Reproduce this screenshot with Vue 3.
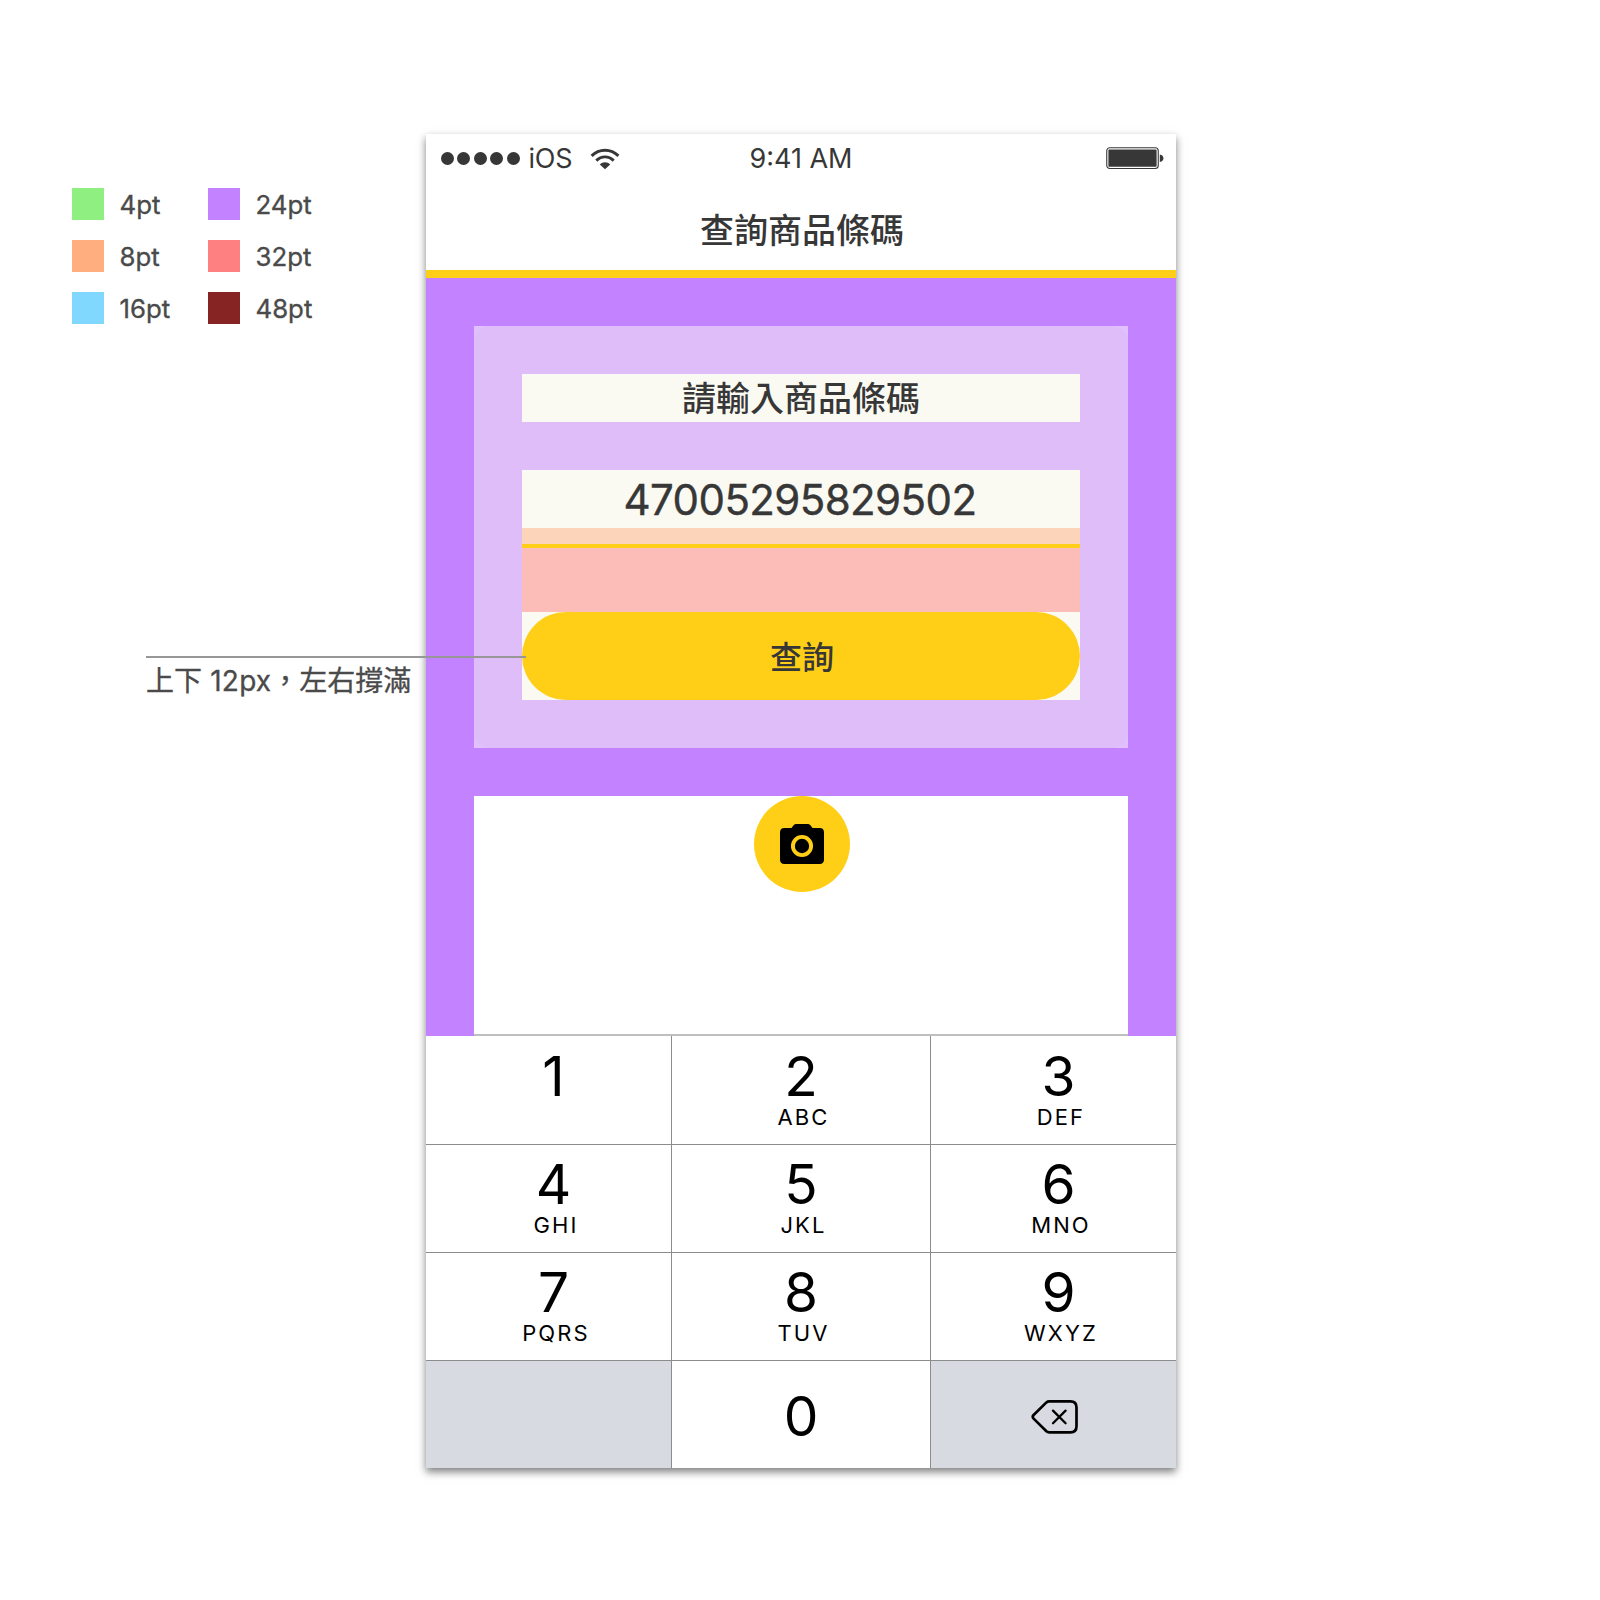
<script setup>
const legend = [
  { label: '4pt', tone: 'green' },
  { label: '24pt', tone: 'purple' },
  { label: '8pt', tone: 'orange' },
  { label: '32pt', tone: 'pink' },
  { label: '16pt', tone: 'blue' },
  { label: '48pt', tone: 'maroon' },
]

const keys = [
  { digit: '1', letters: '' },
  { digit: '2', letters: 'ABC' },
  { digit: '3', letters: 'DEF' },
  { digit: '4', letters: 'GHI' },
  { digit: '5', letters: 'JKL' },
  { digit: '6', letters: 'MNO' },
  { digit: '7', letters: 'PQRS' },
  { digit: '8', letters: 'TUV' },
  { digit: '9', letters: 'WXYZ' },
]
</script>

<template>
  <div class="board">
    <aside class="side">
      <div class="legend">
        <div v-for="item in legend" :key="item.label" class="legend-item">
          <span class="swatch" :class="item.tone"></span>
          <span class="legend-label">{{ item.label }}</span>
        </div>
      </div>
      <div class="note">上下 <span class="latin">12px</span>，左右撐滿</div>
    </aside>

    <main class="phone">
      <header class="header">
        <div class="status">
          <div class="status-left">
            <span class="dots"><i v-for="n in 5" :key="n"></i></span>
            <span class="carrier">iOS</span>
            <svg class="wifi" width="30" height="22" viewBox="0 0 30 22">
              <g fill="none" stroke="#373737" stroke-width="2.9">
                <path d="M1.6 7.9C9.2 0.3 20.8 0.3 28.4 7.9" />
                <path d="M6.3 12.6C11.4 7.6 18.6 7.6 23.7 12.6" />
              </g>
              <path d="M9.8 16.4C12.8 13.6 17.2 13.6 20.2 16.4L15 21.3Z" fill="#373737" />
            </svg>
          </div>
          <span class="time">9:41 AM</span>
          <div class="status-right">
            <svg width="58" height="23" viewBox="0 0 58 23">
              <rect x="0.75" y="0.75" width="51.5" height="20.8" rx="3" fill="#fff" stroke="#373737" stroke-width="1.1" />
              <rect x="2.4" y="2.6" width="48.2" height="17.2" rx="0.8" fill="#373737" />
              <path d="M53.8 7.4C58.6 7.8 58.6 14.6 53.8 15Z" fill="#373737" />
            </svg>
          </div>
        </div>
        <h1 class="title">查詢商品條碼</h1>
      </header>

      <section class="body">
        <div class="card">
          <div class="card-surface">
            <div class="prompt">請輸入商品條碼</div>
            <div class="code">47005295829502</div>
            <div class="gap-small"></div>
            <div class="rule"></div>
            <div class="gap-large"></div>
            <div class="button-box"><button class="button">查詢</button></div>
          </div>
        </div>
        <div class="scan">
          <div class="camera">
            <svg width="44" height="40" viewBox="0 0 44 40">
              <path d="M16.4 0H27.6Q29.4 0 30.4 1.2L32.6 4H39.6Q44 4 44 8.4V35.6Q44 40 39.6 40H4.4Q0 40 0 35.6V8.4Q0 4 4.4 4H11.4L13.6 1.2Q14.6 0 16.4 0Z" />
              <circle cx="22" cy="22" r="9.1" fill="none" stroke="#ffcf17" stroke-width="3.9" />
            </svg>
          </div>
        </div>
      </section>

      <section class="keypad">
        <div v-for="k in keys" :key="k.digit" class="key">
          <span class="digit">{{ k.digit }}</span>
          <span class="letters">{{ k.letters }}</span>
        </div>
        <div class="key grey"></div>
        <div class="key zero"><span class="digit">0</span></div>
        <div class="key grey erase">
          <svg width="48" height="36" viewBox="0 0 48 36" fill="none" stroke="#000" stroke-linecap="round" stroke-linejoin="round">
            <path d="M18.2 2.3H39.4Q45.5 2.3 45.5 8.4V27.2Q45.5 33.3 39.4 33.3H18.2Q16.6 33.3 15.4 32.2L2.6 19.6Q0.9 17.8 2.6 16L15.4 3.4Q16.6 2.3 18.2 2.3Z" stroke-width="2.7" />
            <path d="M22 11.6L34.6 24.2M34.6 11.6L22 24.2" stroke-width="2.3" />
          </svg>
        </div>
      </section>
    </main>

    <div class="callout"></div>
  </div>
</template>

<style>
body {
  background: #fff;
}
</style>

<style scoped>
.board {
  position: relative;
  display: flex;
  box-sizing: border-box;
  width: 1600px;
  height: 1600px;
  padding-top: 134px;
  overflow: hidden;
  font-family: Inter, "Noto Sans CJK TC", sans-serif;
  color: #373737;
}
.side {
  flex: none;
  width: 426px;
  color: #4a4a4a;
}
.legend {
  display: grid;
  grid-template-columns: 136px 136px;
  row-gap: 20px;
  padding: 54px 0 0 72px;
}
.legend-item {
  display: flex;
  align-items: center;
  gap: 15.5px;
  height: 32px;
}
.swatch {
  width: 32px;
  height: 32px;
}
.green { background: #8fef80; }
.purple { background: #c382ff; }
.orange { background: #ffae80; }
.blue { background: #80d8ff; }
.pink { background: #ff8080; }
.maroon { background: #862323; }
.legend-label {
  padding-top: 2px;
  font-size: 25.8px;
  line-height: 32px;
  -webkit-text-stroke: 0.35px #4a4a4a;
}
.note {
  margin: 335px 0 0 146px;
  font: 400 28px/40px "Noto Sans CJK TC", sans-serif;
  white-space: nowrap;
  word-spacing: 2px;
  -webkit-text-stroke: 0.3px #4a4a4a;
}
.latin {
  font-family: Inter, sans-serif;
  letter-spacing: 0.2px;
}
.callout {
  position: absolute;
  left: 146px;
  top: 656px;
  width: 380px;
  height: 2px;
  background: #979797;
}
.phone {
  display: flex;
  flex-direction: column;
  flex: none;
  width: 750px;
  height: 1334px;
  background: #fff;
  box-shadow: 0 4px 8px rgba(0, 0, 0, 0.5);
}
.header {
  box-sizing: border-box;
  height: 144px;
  border-bottom: 8px solid #ffcf17;
}
.status {
  display: grid;
  grid-template-columns: 1fr auto 1fr;
  height: 49px;
  font-size: 27px;
  line-height: 49px;
}
.status-left {
  display: flex;
  align-items: center;
  padding-left: 15px;
}
.dots {
  display: flex;
  gap: 3.4px;
}
.dots i {
  width: 13px;
  height: 13px;
  border-radius: 50%;
  background: #373737;
}
.carrier {
  width: 45px;
  margin-left: 9px;
  letter-spacing: -0.3px;
}
.wifi {
  margin-left: 16px;
}
.status-right {
  display: flex;
  justify-content: flex-end;
  align-items: center;
  padding-right: 12px;
}
.title {
  margin: 0;
  padding: 22px 0 0 2px;
  font: 500 34px/48px "Noto Sans CJK TC", sans-serif;
  text-align: center;
}
.body {
  box-sizing: border-box;
  display: flex;
  flex-direction: column;
  gap: 48px;
  height: 758px;
  padding: 48px 48px 0;
  background: #c382ff;
}
.card {
  background: #e1c0ff;
}
.card-surface {
  padding: 48px;
  border-radius: 16px;
  background: #debdf9;
}
.prompt {
  height: 48px;
  margin-bottom: 48px;
  background: #fafaf3;
  font: 500 34px/46px "Noto Sans CJK TC", sans-serif;
  text-align: center;
}
.code {
  height: 58px;
  padding-right: 2px;
  background: #fafaf3;
  font-size: 42px;
  line-height: 59px;
  letter-spacing: -0.6px;
  text-align: center;
  -webkit-text-stroke: 0.4px #373737;
}
.gap-small {
  height: 16px;
  background: #fcd4b9;
}
.rule {
  height: 4px;
  background: #ffcf17;
}
.gap-large {
  height: 64px;
  background: #fcbdb9;
}
.button-box {
  height: 88px;
  background: #fafaf3;
}
.button {
  display: block;
  width: 100%;
  height: 88px;
  padding: 0 0 3px 2px;
  border: 0;
  border-radius: 44px;
  background: #ffcf17;
  color: #373737;
  font: 500 32px/48px "Noto Sans CJK TC", sans-serif;
}
.scan {
  flex: 1;
  display: flex;
  justify-content: center;
  align-items: flex-start;
  background: #fff;
  border-bottom: 2px solid #bfbfbf;
}
.camera {
  display: flex;
  align-items: center;
  justify-content: center;
  width: 96px;
  height: 96px;
  margin-left: 2px;
  border-radius: 50%;
  background: #ffcf17;
}
.keypad {
  display: grid;
  grid-template-columns: 246px 259px 245px;
  grid-auto-rows: 108px;
  color: #000;
}
.key {
  box-sizing: border-box;
  display: flex;
  flex-direction: column;
  align-items: center;
  padding-top: 9px;
  border-right: 1px solid #8c8c8c;
  border-top: 1px solid #8c8c8c;
}
.key:nth-child(-n + 3) {
  padding-top: 10px;
  border-top: 0;
}
.key:nth-child(3n) {
  border-right: 0;
}
.key:nth-child(3n),
.key:nth-child(3n + 1) {
  padding-left: 10px;
}
.digit {
  font-size: 55px;
  line-height: 58px;
  padding-top: 1px;
}
.letters {
  padding-left: 5px;
  font-size: 22px;
  line-height: 24px;
  letter-spacing: 2.1px;
}
.key.zero {
  padding-top: 25px;
}
.grey {
  background: #d7dae0;
}
.key.erase {
  padding: 38px 0 0 2px;
}
</style>
